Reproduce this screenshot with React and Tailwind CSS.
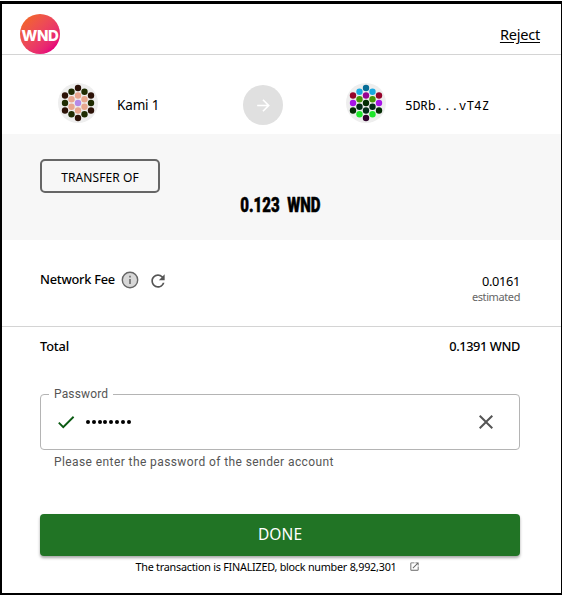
import React from "react";
import { MdArrowForward, MdRefresh, MdCheck, MdClose, MdOpenInNew } from "react-icons/md";

// Column order: centre, inner left, inner right, outer left, outer right.
const DOTS = [
  [20, 5], [20, 12.5], [20, 20], [20, 27.5], [20, 35],
  [13.5, 8.7], [13.5, 16.2], [13.5, 23.8], [13.5, 31.3],
  [26.5, 8.7], [26.5, 16.2], [26.5, 23.8], [26.5, 31.3],
  [7, 12.5], [7, 20], [7, 27.5],
  [33, 12.5], [33, 20], [33, 27.5],
];

const KAMI = [
  "#2c1207", "#e8a78f", "#b48ae8", "#e8a78f", "#2c1207",
  "#1f2c02", "#e8a78f", "#e8a78f", "#1f2c02",
  "#1f2c02", "#e8a78f", "#e8a78f", "#1f2c02",
  "#2c1207", "#1f2c02", "#2c1207",
  "#2c1207", "#1f2c02", "#2c1207",
];

const RECIPIENT = [
  "#076d96", "#960391", "#042d04", "#032d17", "#30022b",
  "#18a9e0", "#479608", "#032d17", "#1de62a",
  "#18a9e0", "#479608", "#032d17", "#1de62a",
  "#96032b", "#a715e8", "#042d04",
  "#96032b", "#a715e8", "#042d04",
];

function Identicon({ colors }) {
  return (
    <svg viewBox="0 0 40 40" className="size-10 shrink-0">
      <circle cx="20" cy="20" r="20" fill="#eeeeee" />
      {DOTS.map(([x, y], i) => (
        <circle key={i} cx={x} cy={y} r="3.2" fill={colors[i]} />
      ))}
    </svg>
  );
}

function InfoIcon() {
  return (
    <svg viewBox="0 0 18 18" className="ml-[6px] size-[18px]">
      <circle cx="9" cy="9" r="7.7" fill="#d8d8d8" stroke="#666" strokeWidth="1.4" />
      <path d="M9 4.8v1.7M9 8v5" stroke="#777" strokeWidth="1.8" />
    </svg>
  );
}

export default function App() {
  return (
    <div className="h-[595px] w-[562px] bg-white pt-px font-['Noto_Sans',sans-serif] text-black">
      <div className="flex h-[594px] flex-col border-t-3 border-r border-b-2 border-l-2 border-black">
        <header className="flex h-[51px] shrink-0 justify-between border-b border-[#d4d4d4] pr-[21px] pl-[18px]">
          <div className="mt-[10px] flex size-10 items-center justify-center rounded-full bg-linear-135 from-[#f26522] from-10% to-[#e6007a] to-85%">
            <span className="pt-0.5 font-['Inter',sans-serif] text-[15px] leading-none font-extrabold tracking-[-0.45px] text-white">WND</span>
          </div>
          <a className="mt-[19px] h-[22px] text-[14.6px] leading-[22px] tracking-[-0.25px] underline underline-offset-2">Reject</a>
        </header>

        <section className="flex h-[79px] shrink-0 items-center pt-[17px] pl-[56px]">
          <div className="flex w-[185px] items-center gap-[19px]">
            <Identicon colors={KAMI} />
            <span className="pt-1 text-[13.5px] leading-5 tracking-[-0.15px]">Kami 1</span>
          </div>
          <div className="mt-1 flex size-10 items-center justify-center rounded-full bg-[#e0e0e0]">
            <MdArrowForward className="size-[19px] text-white" />
          </div>
          <div className="ml-[63px] flex items-center gap-[19px]">
            <Identicon colors={RECIPIENT} />
            <span className="pt-1 font-['Noto_Sans_Mono','DejaVu_Sans_Mono',monospace] text-[11.8px] leading-5">
              <span className="inline-block origin-left scale-x-[1.085]">5DRb...vT4Z</span>
            </span>
          </div>
        </section>

        <section className="flex h-[106px] shrink-0 flex-col bg-[#f7f7f7] pt-[25px] pl-[38px]">
          <div className="flex h-[34px] w-[120px] items-center justify-center rounded-[5px] border-2 border-[#666] pt-[3px] text-[12px] tracking-[0.1px]">TRANSFER OF</div>
          <div className="mt-px flex h-[22px] w-[480px] items-center justify-center">
            <span className="scale-x-[.75] font-['Roboto',sans-serif] text-[20px] leading-none font-black whitespace-pre [-webkit-text-stroke:0.5px_black]">0.123  WND</span>
          </div>
        </section>

        <section className="flex h-[87px] shrink-0 justify-between border-b border-[#d4d4d4] pr-[41px] pl-[38px]">
          <div className="mt-[30px] flex h-5 items-center text-[12.8px] font-medium">
            <span className="tracking-[-0.25px]">Network Fee</span>
            <InfoIcon />
            <MdRefresh className="mt-0.5 ml-[9px] size-[20px] text-[#555]" />
          </div>
          <div className="flex flex-col items-end pt-[33px]">
            <span className="text-[12.8px] leading-4 tracking-[-0.35px]">0.0161</span>
            <span className="text-[11px] leading-[15px] tracking-[-0.4px] text-[#666]">estimated</span>
          </div>
        </section>

        <section className="flex h-[67px] shrink-0 justify-between pt-[9px] pr-[41px] pl-[38px] text-[12.8px] leading-5 font-medium">
          <span className="tracking-[-0.15px]">Total</span>
          <span className="tracking-[-0.4px]">0.1391 WND</span>
        </section>

        <section className="flex shrink-0 flex-col pl-[38px]">
          <div className="relative flex h-[56px] w-[480px] items-center rounded-[4px] border border-[#b4b4b4] pr-[21px] pl-[14px] font-['Roboto',sans-serif]">
            <label className="absolute top-[-8px] left-[8px] bg-white px-[5px] text-[12px] leading-[14px] tracking-[0.15px] text-[#555]">Password</label>
            <MdCheck className="size-[22px] text-[#0a5a12]" />
            <div className="ml-[9px] flex flex-1 gap-[1.8px]">
              {[0, 1, 2, 3, 4, 5, 6, 7].map((n) => (
                <span key={n} className="size-[4px] rounded-full bg-black" />
              ))}
            </div>
            <MdClose className="size-[24px] text-[#555]" />
          </div>
          <p className="mt-[4px] ml-[14px] h-4 font-['Roboto',sans-serif] text-[12px] leading-4 tracking-[0.41px] text-[#555]">Please enter the password of the sender account</p>
          <button className="mt-[44px] flex h-[42px] w-[480px] items-center justify-center rounded-[4px] bg-[#217425] pb-px text-[15.5px] tracking-[0.1px] text-white shadow-[0_2px_3px_rgba(0,0,0,0.35)]">DONE</button>
          <div className="mt-[2px] flex h-[18px] items-center pl-[95.5px] text-[10.8px] tracking-[-0.24px]">
            <span className="whitespace-nowrap">The transaction is FINALIZED, block number 8,992,301</span>
            <MdOpenInNew className="mb-0.5 ml-[12px] size-[11px] text-[#666]" />
          </div>
        </section>
      </div>
    </div>
  );
}
